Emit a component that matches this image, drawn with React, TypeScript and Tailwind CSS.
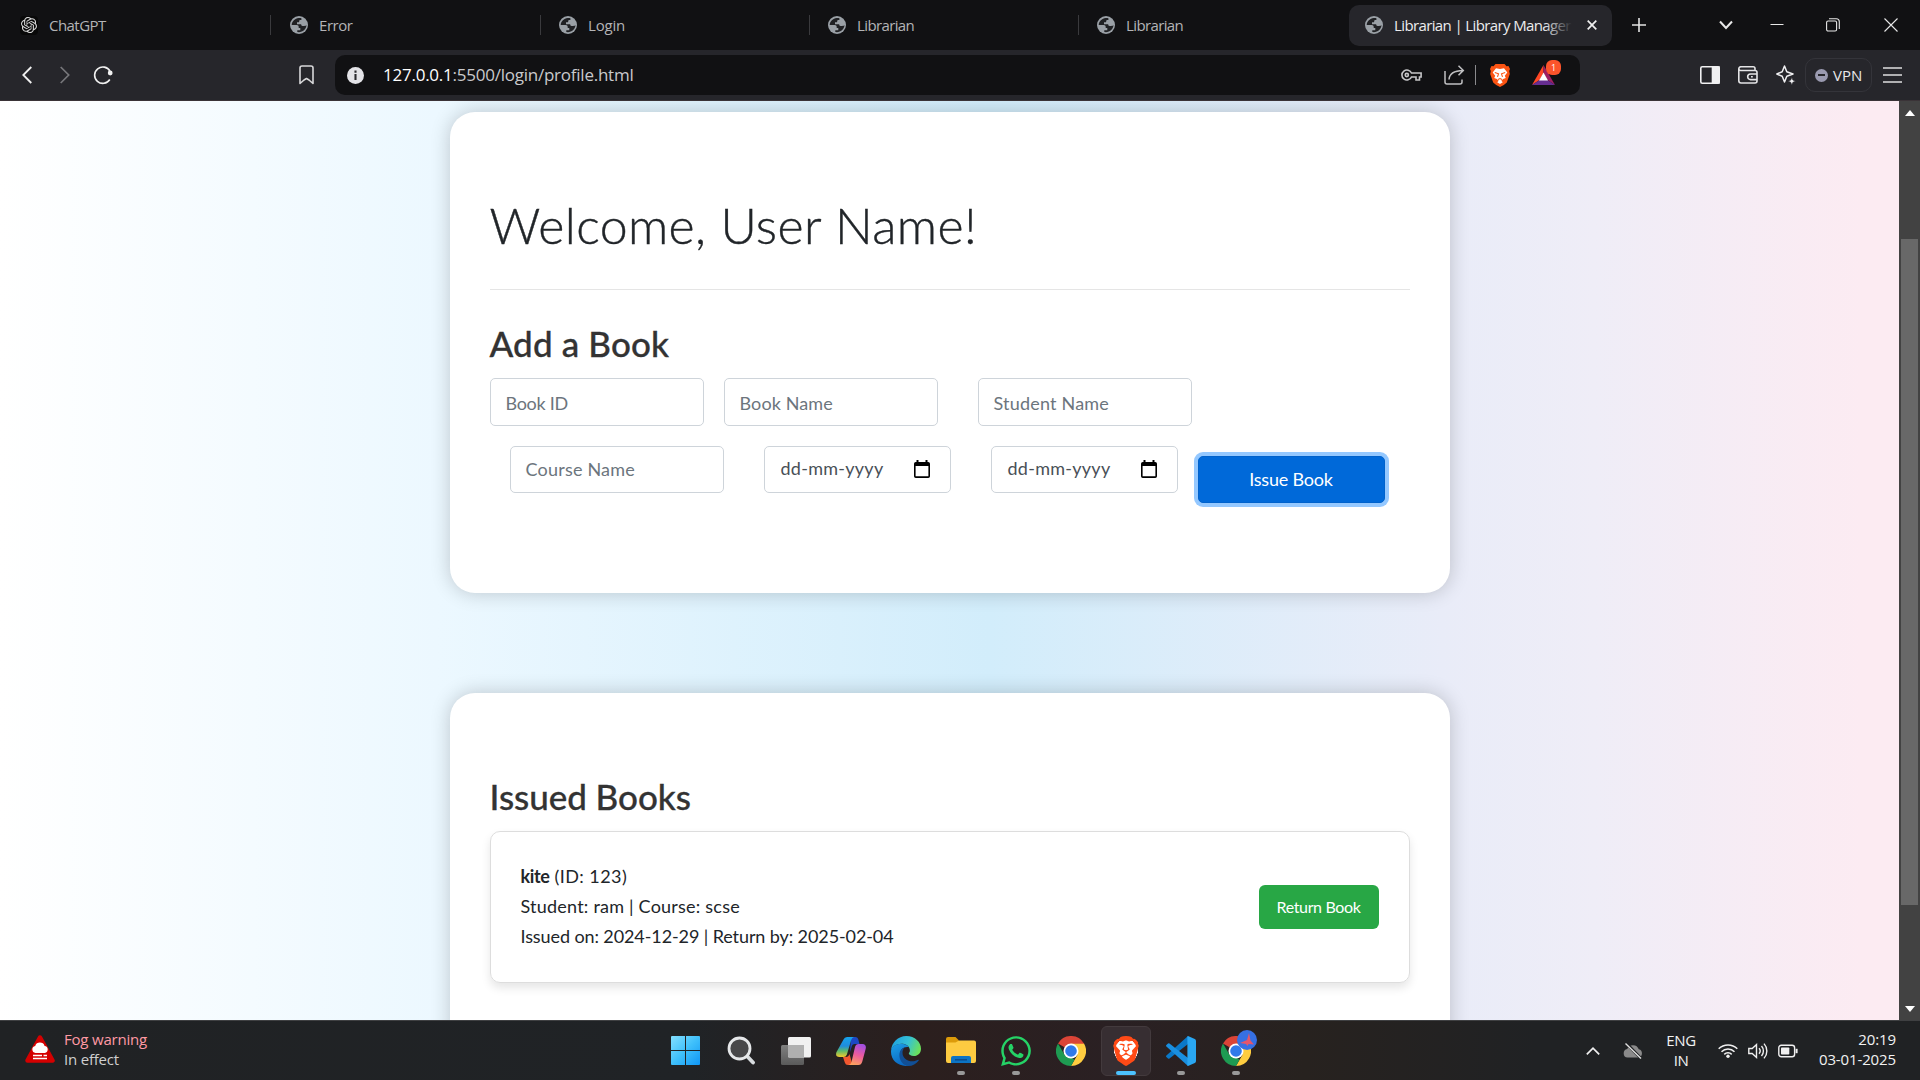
import type { ReactNode } from "react";
import { SiBrave, SiOpenai } from "react-icons/si";
import { FaWhatsapp } from "react-icons/fa";

function Globe() {
  return (
    <svg className="h-[18px] w-[18px] shrink-0" viewBox="0 0 18 18">
      <circle cx="9" cy="9" r="9" fill="#9aa0a6" />
      <path
        d="M8.6 2.1C5 2.5 2 5.300 1.700 8.900l5 .1c1.300 0 2 .9 2 2.100v.9h1.600v2.200H7.300v1.900c5 .8 9-2.600 9.200-7-.4.7-1.300.9-2.300.9h-1.600c-1 0-1.400-.8-1.400-1.700H7V6.300h1.300c.8 0 .9-.6.9-1.100 0-.8.500-1.200 1.300-1.200h.9V2.300c-.9-.3-1.900-.3-2.800-.2Z"
        fill="#202124"
      />
    </svg>
  );
}

function Tab({ label, icon, spacing = "tracking-[-0.62px]" }: { label: string; icon: ReactNode; spacing?: string }) {
  return (
    <div className="flex h-full w-[269px] shrink-0 items-center">
      <div className="flex flex-1 items-center gap-[11px]">
        {icon}
        <span className={"text-[15px] leading-5 text-[#b4b4b6] " + spacing}>{label}</span>
      </div>
      <div className="mr-[18px] h-5 w-px bg-[#3a3a3d]" />
    </div>
  );
}

function TabStrip() {
  return (
    <div className="flex h-[50px] shrink-0 items-center bg-[#111113] pl-[20px] pr-[22px]">
      <div className="mr-px flex h-full items-center">
        <Tab
          label="ChatGPT"
          spacing="tracking-[-0.55px]"
          icon={
            <span className="flex h-[19px] w-[18px] items-center justify-center rounded bg-[#080808]">
              <SiOpenai className="h-4 w-4 text-[#d8d8d8]" />
            </span>
          }
        />
      </div>
      <Tab label="Error" icon={<Globe />} spacing="tracking-[-0.45px]" />
      <Tab label="Login" icon={<Globe />} spacing="tracking-[-0.2px]" />
      <Tab label="Librarian" icon={<Globe />} />
      <div className="flex h-full w-[252px] shrink-0 items-center gap-[11px]">
        <Globe />
        <span className="text-[15px] leading-5 tracking-[-0.62px] text-[#b4b4b6]">Librarian</span>
      </div>
      <div className="flex h-[41px] w-[263px] shrink-0 items-center rounded-[10px] bg-[#26262b] pl-4">
        <Globe />
        <div className="relative ml-[11px] w-[178px] whitespace-nowrap text-[15px] leading-5 tracking-[-0.62px] text-[#ececee]">
          Librarian | Library Manager
          <div className="absolute inset-y-0 right-0 w-7 bg-gradient-to-r from-transparent to-[#26262b]" />
        </div>
        <svg className="ml-[15px] h-[10px] w-[10px]" viewBox="0 0 10 10" stroke="#f0f0f0" strokeWidth="1.7">
          <path d="M.7.7l8.600 8.600M9.300.7L.7 9.300" />
        </svg>
      </div>
      <svg className="ml-5 h-[14px] w-[14px]" viewBox="0 0 14 14" stroke="#e4e4e4" strokeWidth="1.6">
        <path d="M7 0v14M0 7h14" />
      </svg>
      <svg className="ml-[73px] h-3 w-[14px]" viewBox="0 0 14 12" fill="none" stroke="#e8e8e8" strokeWidth="2">
        <path d="M1 2.500l6 6.500 6-6.500" />
      </svg>
      <svg className="ml-[37px] h-[14px] w-[14px]" viewBox="0 0 14 14" stroke="#e8e8e8" strokeWidth="1">
        <path d="M.5 6.500h13" />
      </svg>
      <svg className="ml-[42px] h-[14px] w-[14px]" viewBox="0 0 14 14" fill="none" stroke="#e8e8e8" strokeWidth="1.1">
        <rect x=".6" y="3" width="10" height="10" rx="1.500" />
        <path d="M3 .7h7.300a3 3 0 0 1 3 3V11" />
      </svg>
      <svg className="ml-[44px] h-[14px] w-[14px]" viewBox="0 0 14 14" fill="none" stroke="#e8e8e8" strokeWidth="1.1">
        <path d="M.5.5l13 13M13.500.5l-13 13" />
      </svg>
    </div>
  );
}

function Toolbar() {
  return (
    <div className="flex h-[51px] shrink-0 items-center border-b border-[#3a3337] bg-[#26262b] pl-[22px]">
      <svg className="h-[18px] w-[10px]" viewBox="0 0 10 18" fill="none" stroke="#f0f0f0" strokeWidth="1.8">
        <path d="M9.300 1L1.300 9l8 8" />
      </svg>
      <svg className="ml-[28px] h-[18px] w-[10px]" viewBox="0 0 10 18" fill="none" stroke="#77777b" strokeWidth="1.700">
        <path d="M.7 1l8 8-8 8" />
      </svg>
      <svg className="ml-[23px] h-5 w-[21px]" viewBox="0 0 21 20" fill="none" stroke="#f0f0f0" strokeWidth="1.600">
        <path d="M16.800 14.500A8.200 8.200 0 1 1 17 6.200" />
        <circle cx="17.200" cy="8" r="2.400" fill="#f0f0f0" stroke="none" />
      </svg>
      <svg className="ml-[185px] h-5 w-[15px]" viewBox="0 0 15 20" fill="none" stroke="#d8d8da" strokeWidth="1.600" strokeLinejoin="round">
        <path d="M1 3a2 2 0 0 1 2-2h9a2 2 0 0 1 2 2v15.500l-4-3.500-2.500-1.500L5 15l-4 3.500Z" />
      </svg>
      <div className="ml-[21px] flex h-10 w-[1245px] shrink-0 items-center rounded-[10px] bg-[#111113] pl-3">
        <svg className="h-[17px] w-[17px]" viewBox="0 0 17 17">
          <circle cx="8.500" cy="8.500" r="8.500" fill="#e4e4e8" />
          <path d="M8.500 3.500v2.200M8.500 7v6" stroke="#2a2a2e" strokeWidth="2.100" />
        </svg>
        <span className="ml-[19px] w-[1018px] whitespace-nowrap text-[17px] leading-6 tracking-[-0.24px] text-[#c9c9cc]">
          <span className="text-white">127.0.0.1</span>:5500/login/profile.html
        </span>
        <svg className="h-3 w-[21px]" viewBox="0 0 21 12" fill="none" stroke="#c6c6c8" strokeWidth="1.600">
          <path d="M10.500 4h9.600v4h-1.600v3h-3.500V8h-4.500A5 5 0 1 1 10.500 4Z" />
          <circle cx="5.800" cy="6" r="1.600" />
        </svg>
        <svg className="ml-[22px] h-5 w-[21px]" viewBox="0 0 21 20" fill="none" stroke="#c0c0c2" strokeWidth="1.500">
          <path d="M1 6v11a2 2 0 0 0 2 2h13a2 2 0 0 0 2-2v-2.500" />
          <path d="M5 14.500C5.300 9 9.500 5.600 19 5.400M14.500.8L19.300 5.400l-4.800 4.800" />
        </svg>
        <div className="ml-[10px] h-5 w-px bg-[#8a8a8d]" />
        <svg className="ml-[14px] h-6 w-5" viewBox="0 0 20 24">
          <path d="M5.500 1h9L16.500 3.200l2-.2L20 6l-.8 2 .6 3-3 8.500-3 2.500L10 24l-3.800-2-3-2.500L.2 11l.6-3L0 6l1.500-3 2 .2Z" fill="#fb5413" />
          <path d="M6 5.300l4 .8 4-.8 3.300 4.200-2.500 3.300 1 2.200-2.700 1-1.800 1.800 1.500 1.500L10 21l-2.800-1.700 1.500-1.500L6.900 16l-2.700-1 1-2.200L2.700 9.500Z" fill="#fff" />
          <path d="M4.800 9.500l3.700 1.300-1 3M15.200 9.500l-3.700 1.300 1 3M8 16.500l2-1 2 1" stroke="#fb5413" fill="none" strokeWidth="1.100" />
        </svg>
        <div className="relative ml-[22px] h-5 w-[23px]">
          <svg className="h-5 w-[23px]" viewBox="0 0 23 20">
            <path d="M11.500 0L0 20l7.500-5 4-7Z" fill="#ff4724" />
            <path d="M11.500 0L23 20l-7.500-5-4-7Z" fill="#9e1f63" />
            <path d="M0 20h23l-7.500-5h-8Z" fill="#662d91" />
            <path d="M11.500 7.500L7 15.500h9Z" fill="#fff" />
          </svg>
          <div className="absolute -top-[5px] left-[14px] flex h-[15px] w-[15px] items-center justify-center rounded-[6px] bg-[#fb542b] text-[9px] leading-none text-white">
            1
          </div>
        </div>
      </div>
      <svg className="ml-[120px] h-[18px] w-5" viewBox="0 0 20 18" fill="none" stroke="#f0f0f2" strokeWidth="1.600">
        <rect x=".8" y=".8" width="18.400" height="16.400" rx="1.500" />
        <path d="M12.500 1h6.500v16h-6.500Z" fill="#f0f0f2" />
      </svg>
      <svg className="ml-[18px] h-[18px] w-5" viewBox="0 0 20 18" fill="none" stroke="#e4e4e6" strokeWidth="1.600">
        <path d="M17 4.500V2.600A1.800 1.800 0 0 0 15.200.8H3A2 2 0 0 0 .8 2.800v12a2.200 2.200 0 0 0 2.200 2.200h14a2 2 0 0 0 2-2v-8.500a2 2 0 0 0-2-2H3A2 2 0 0 1 .8 2.800" />
        <path d="M19 8h-6.500a2.800 2.800 0 0 0 0 5.600H19M13 10.800h1.800" />
      </svg>
      <svg className="ml-[18px] h-5 w-5" viewBox="0 0 20 20" fill="none" stroke="#f0f0f2" strokeWidth="1.500" strokeLinejoin="round">
        <path d="M8.500 1l2.300 5.700L17 9l-6.200 2.300L8.500 17l-2.300-5.700L.8 9l5.400-2.300Z" />
        <path d="M15.800 12.500l1.100 2.600 2.600 1.100-2.600 1.100-1.100 2.600-1.100-2.600-2.600-1.100 2.600-1.100Z" fill="#f0f0f2" stroke="#26262b" strokeWidth=".6" />
      </svg>
      <div className="ml-[9px] flex h-[34px] w-[67px] shrink-0 items-center rounded-[10px] border border-[#34343a] pl-[9px]">
        <div className="flex h-[13px] w-[13px] items-center justify-center rounded-full bg-[#9a9ab0]">
          <div className="h-[2px] w-[7px] bg-[#26262b]" />
        </div>
        <span className="ml-[5px] text-[15px] leading-5 text-[#e8e8ea]">VPN</span>
      </div>
      <svg className="ml-[11px] h-4 w-[19px]" viewBox="0 0 19 16" stroke="#dededf" strokeWidth="1.500">
        <path d="M0 1h19M0 8h19M0 15h19" />
      </svg>
    </div>
  );
}

function CalendarIcon() {
  return (
    <svg className="h-[18px] w-4" viewBox="0 0 16 18">
      <path d="M2.500 0h2v2h7V0h2v2h.7A1.800 1.800 0 0 1 16 3.800v12.400a1.800 1.800 0 0 1-1.800 1.800H1.800A1.800 1.800 0 0 1 0 16.200V3.800A1.800 1.800 0 0 1 1.800 2h.7ZM1.600 6v10.300h12.800V6Z" fill="#000" />
    </svg>
  );
}

function Field({ label, size = "h-12 pt-[2px]", spacing }: { label: string; size?: string; spacing: string }) {
  return (
    <div className={"flex w-[214px] items-center rounded-[5px] border border-[#ced4da] pl-[15px] text-[18px] text-[#6c757d] " + size + " " + spacing}>
      {label}
    </div>
  );
}

function DateField() {
  return (
    <div className="flex h-[47px] w-[187px] items-center justify-between rounded-[5px] border border-[#ced4da] pl-4 pr-5 text-[18px] tracking-[0.27px] text-[#495057]">
      <span className="-mt-[2px]">dd-mm-yyyy</span>
      <div className="-mt-[1px]">
        <CalendarIcon />
      </div>
    </div>
  );
}

function Page() {
  return (
    <div className="flex h-[919px] shrink-0 overflow-hidden">
      <main className="w-[1899px] bg-[linear-gradient(90deg,#ffffff_0%,#ecf8ff_23%,#d2edfb_52%,#e9ecf8_76%,#efedf7_84%,#fcebf2_98%)] font-['Lato',sans-serif]">
        <section className="mx-auto mt-[11px] h-[481px] w-[1000px] rounded-[25px] bg-white px-10 pt-[83px] shadow-[0_0_20px_rgba(0,0,0,0.2)]">
          <h1 className="text-[50px] font-light leading-[60px] tracking-[0.4px] text-[#212529] [-webkit-text-stroke:0.4px_#212529]">
            Welcome, User Name!
          </h1>
          <div className="mt-[34px] h-px bg-[#e5e5e5]" />
          <h2 className="mt-8 text-[35px] font-medium leading-[42px] tracking-[0.15px] text-[#333333] [-webkit-text-stroke:0.3px_#333333]">
            Add a Book
          </h2>
          <div className="mt-[14px] flex">
            <Field label="Book ID" spacing="tracking-[-0.3px]" />
            <div className="ml-5">
              <Field label="Book Name" spacing="tracking-[0.1px]" />
            </div>
            <div className="ml-10">
              <Field label="Student Name" spacing="tracking-[0.2px]" />
            </div>
          </div>
          <div className="mt-5 flex items-start pl-5">
            <Field label="Course Name" size="h-[47px]" spacing="tracking-[0.2px]" />
            <div className="ml-10">
              <DateField />
            </div>
            <div className="ml-10">
              <DateField />
            </div>
            <button className="ml-5 mt-[10px] h-[47px] w-[187px] rounded-[5px] border border-[#0062cc] bg-[#0069d9] pb-px text-[18px] tracking-[-0.2px] text-white shadow-[0_0_0_4px_#94c8ff]">
              Issue Book
            </button>
          </div>
        </section>
        <section className="mx-auto mt-[100px] h-[400px] w-[1000px] rounded-[25px] bg-white px-10 pt-[82px] shadow-[0_0_20px_rgba(0,0,0,0.2)]">
          <h2 className="text-[35px] font-medium leading-[42px] tracking-[-0.05px] text-[#333333] [-webkit-text-stroke:0.3px_#333333]">
            Issued Books
          </h2>
          <div className="mt-[14px] flex h-[152px] items-center justify-between rounded-[10px] border border-[#dddddd] px-[30px] shadow-[0_5px_10px_rgba(0,0,0,0.1)]">
            <div className="-mt-[2px] whitespace-nowrap text-[18px] leading-[30px] text-[#212529]">
              <p className="tracking-[0.42px]">
                <span className="font-bold tracking-[-0.35px]">kite</span> (ID: 123)
              </p>
              <p className="tracking-[0.22px]">Student: ram | Course: scse</p>
              <p className="tracking-[-0.1px]">Issued on: 2024-12-29 | Return by: 2025-02-04</p>
            </div>
            <button className="h-11 w-[120px] rounded-[6px] bg-[#28a745] text-[16px] tracking-[-0.36px] text-white">Return Book</button>
          </div>
        </section>
      </main>
      <div className="flex w-[21px] flex-col items-center bg-[#424242]">
        <svg className="mt-[9px] h-[6px] w-[10px]" viewBox="0 0 10 6">
          <path d="M0 6l5-6 5 6Z" fill="#fff" />
        </svg>
        <div className="mt-[123px] h-[666px] w-[17px] bg-[#686868]" />
        <svg className="mt-[101px] h-[6px] w-[10px]" viewBox="0 0 10 6">
          <path d="M0 0l5 6 5-6Z" fill="#fff" />
        </svg>
      </div>
    </div>
  );
}

function ChromeLogo() {
  return (
    <svg className="h-[30px] w-[30px]" viewBox="0 0 48 48">
      <path d="M24 24L3.200 12A24 24 0 0 1 44.800 12Z" fill="#db4437" />
      <path d="M24 12h20.800A24 24 0 0 1 24 48l10.400-18Z" fill="#ffcd40" />
      <path d="M3.200 12l10.400 18L24 34l5.600 4L24 48A24 24 0 0 1 3.200 12Z" fill="#1e9b52" />
      <path d="M24 12h20.800l-.6-1H22Z" fill="#db4437" />
      <circle cx="24" cy="24" r="12" fill="#fff" />
      <circle cx="24" cy="24" r="9.300" fill="#3079ea" />
    </svg>
  );
}

function TaskItem({ children, state = "idle" }: { children: ReactNode; state?: "idle" | "open" | "active" }) {
  return (
    <div className="flex w-[55px] justify-center">
      <div
        className={
          state === "active"
            ? "flex h-[50px] w-[50px] flex-col items-center rounded-[6px] border border-[#433a3d] bg-[#372e32] pt-[9px]"
            : "flex h-[50px] w-[50px] flex-col items-center pt-[10px]"
        }
      >
        <div className="flex h-[30px] items-center">{children}</div>
        {state === "open" && <div className="mt-[5px] h-1 w-2 shrink-0 rounded-full bg-[#999999]" />}
        {state === "active" && <div className="mt-[5px] h-1 w-5 shrink-0 rounded-full bg-[#4cc2ff]" />}
      </div>
    </div>
  );
}

function Taskbar() {
  return (
    <div className="flex h-[60px] shrink-0 items-center border-t border-[#3f4042] bg-[linear-gradient(90deg,#202224_0%,#202326_36%,#2b1f1e_48%,#2a2023_58%,#27221f_68%,#202224_80%)]">
      <div className="flex w-[658px] items-center pl-[25px]">
        <svg className="-mt-[3px] h-7 w-[30px]" viewBox="0 0 30 28">
          <path d="M15 2.500L27.500 25.500h-25Z" fill="#d40000" stroke="#d40000" strokeWidth="4.500" strokeLinejoin="round" />
          <path d="M10.500 18a3.600 3.600 0 0 1-.3-7.100 5 5 0 0 1 9.400 0 3.600 3.600 0 0 1 .2 7.100Z" fill="#fff" />
          <path d="M8 20.500h9M18.500 20.500H22M8 23.500h14" stroke="#fff" strokeWidth="1.500" />
        </svg>
        <div className="-mt-[3px] ml-[9px] text-[15px] leading-5">
          <div className="tracking-[-0.2px] text-[#ff99a4]">Fog warning</div>
          <div className="tracking-[-0.2px] text-[#cfcfcf]">In effect</div>
        </div>
      </div>
      <TaskItem>
        <svg className="h-[29px] w-[29px]" viewBox="0 0 29 29">
          <defs>
            <linearGradient id="win" x1="0" y1="0" x2="1" y2="1">
              <stop offset="0" stopColor="#84e0ff" />
              <stop offset=".5" stopColor="#3fc0fb" />
              <stop offset="1" stopColor="#0f96f5" />
            </linearGradient>
          </defs>
          <path d="M1 0h13v14H0V1Q0 0 1 0ZM15 0h13q1 0 1 1v13H15ZM0 15h14v14H1q-1 0-1-1ZM15 15h14v13q0 1-1 1H15Z" fill="url(#win)" />
        </svg>
      </TaskItem>
      <TaskItem>
        <svg className="h-[29px] w-[28px]" viewBox="0 0 28 29">
          <path d="M19 19l7 7.500" stroke="#d8dcdf" strokeWidth="3.800" strokeLinecap="round" />
          <circle cx="12.500" cy="12.500" r="10.500" fill="#48484a" stroke="#e6e8ea" strokeWidth="2.800" />
        </svg>
      </TaskItem>
      <TaskItem>
        <svg className="h-7 w-[30px]" viewBox="0 0 30 28">
          <defs>
            <linearGradient id="tv" x1="0" y1="0" x2="0" y2="1">
              <stop offset="0" stopColor="#808080" />
              <stop offset="1" stopColor="#5a5a5a" />
            </linearGradient>
          </defs>
          <rect x="0" y="8" width="23" height="20" rx="1.500" fill="url(#tv)" />
          <rect x="7" y="0" width="23" height="20.500" rx="1.500" fill="#f1f1f1" />
          <path d="M7 8h16v12.500H8.500A1.500 1.500 0 0 1 7 19Z" fill="#b0b0b0" />
        </svg>
      </TaskItem>
      <TaskItem>
        <svg className="h-7 w-[30px]" viewBox="0 0 30 28">
          <defs>
            <linearGradient id="cpa" x1="0" y1="0" x2="0" y2="1">
              <stop offset="0" stopColor="#16a3ec" />
              <stop offset=".45" stopColor="#1f8cdc" />
              <stop offset=".7" stopColor="#5dbb6a" />
              <stop offset="1" stopColor="#f4c92b" />
            </linearGradient>
            <linearGradient id="cpb" x1=".6" y1="0" x2=".3" y2="1">
              <stop offset="0" stopColor="#a44fe0" />
              <stop offset=".5" stopColor="#ee5b9c" />
              <stop offset="1" stopColor="#fba35c" />
            </linearGradient>
          </defs>
          <path d="M15 0h4.500q2 0 2.700 2L23.500 7h-5q-2 0-2.600 2L14 15Z" fill="#1d48c4" />
          <path d="M7.500 2.500Q8.500 0 11 0h7q-2 .3-2.800 3l-4.300 14.500Q10 20 7.500 20H3.500Q-1 20 .4 15.200Z" fill="url(#cpa)" />
          <path d="M7 20h3q2.500 0 3.500-3l2.500 9q.6 2 2 2h-6q-2.500 0-3.200-2.500Z" fill="#f2572f" />
          <path d="M19 10q.8-3 3.500-3H26.500Q31 7.500 29.500 12.500L26.300 24.500Q25.300 28 22.500 28H12.500q2.200-.3 3-3Z" fill="url(#cpb)" />
        </svg>
      </TaskItem>
      <TaskItem>
        <svg className="h-[30px] w-[30px]" viewBox="0 0 30 30">
          <defs>
            <linearGradient id="ea" x1="0" y1=".2" x2="1" y2=".5">
              <stop offset="0" stopColor="#1d9fe0" />
              <stop offset=".55" stopColor="#35c1d5" />
              <stop offset="1" stopColor="#6be05b" />
            </linearGradient>
            <linearGradient id="eb" x1="0" y1="0" x2=".4" y2="1">
              <stop offset="0" stopColor="#1da1e6" />
              <stop offset="1" stopColor="#0b6ac4" />
            </linearGradient>
          </defs>
          <path d="M.1 14.500C.6 6.500 7 0 15.300 0 24 0 30 6.300 30 12.700c0 4.300-3 7.300-7.200 7.300-3.300 0-5-1.300-5-2.400 0-.9 1.100-1.200 1.100-3.200C18.900 10.500 15 7.800 10.500 7.800 5 7.800 1.200 11 .1 14.500Z" fill="url(#ea)" />
          <path d="M0 15.800C0 10.700 5 7.700 10 7.700c3 0 6 1 7.700 3.400-5.500-.8-8.500 2.400-8.500 7.100 0 5.800 4.300 10 9.300 11.300C9 31.600 0 25.500 0 15.800Z" fill="url(#eb)" />
          <path d="M13.500 11.700c-1.300 1.300-2 2.900-2 5 0 5.300 4.700 8.600 9.800 8.600 2.400 0 4.300-.8 5.800-1.600.5-.2.900.2.600.7-2.300 3.500-6.300 5.600-10.300 5.600-5 0-9-5.600-9-10.800 0-4 2-6.700 5.100-7.500Z" fill="#114f96" />
        </svg>
      </TaskItem>
      <TaskItem state="open">
        <svg className="h-[27px] w-[30px]" viewBox="0 0 30 27">
          <path d="M0 2q0-2 2-2h7.500l3.500 3.500V9H0Z" fill="#dc9b0a" />
          <path d="M0 5.500h9.500L13 3.500h15q2 0 2 2V24q0 2-2 2H2q-2 0-2-2Z" fill="#fdcb41" />
          <path d="M5 26v-5q0-2 2-2h16q2 0 2 2v5Z" fill="#0c74c4" />
          <path d="M9 22.800h12" stroke="#0b4c8c" strokeWidth="1.500" />
        </svg>
      </TaskItem>
      <TaskItem state="open">
        <FaWhatsapp className="h-[34px] w-[34px] text-[#25d366]" />
      </TaskItem>
      <TaskItem>
        <ChromeLogo />
      </TaskItem>
      <TaskItem state="active">
        <SiBrave className="h-[30px] w-[30px] rounded-full bg-[radial-gradient(circle,#fff_0_55%,transparent_56%)] text-[#ff4a16]" />
      </TaskItem>
      <TaskItem state="open">
        <svg className="h-[30px] w-[30px]" viewBox="0 0 30 30">
          <path d="M22 0v8L3.500 22.500q-.8.600-1.500 0L.4 21q-.8-.8 0-1.600Z" fill="#0a78c8" />
          <path d="M22 30v-8L3.500 7.500q-.8-.6-1.500 0L.4 9q-.8.8 0 1.600Z" fill="#1a8fe0" />
          <path d="M22 0l6.800 3q1.200.6 1.200 2v20q0 1.400-1.200 2L22 30q-.6 0-.6-1V1q0-1 .6-1Z" fill="#2aa7f2" />
        </svg>
      </TaskItem>
      <TaskItem state="open">
        <div className="relative">
          <ChromeLogo />
          <div className="absolute -top-[6px] left-4 flex h-5 w-5 items-center justify-center rounded-full bg-[#3670e4]">
            <svg className="h-[14px] w-[14px]" viewBox="0 0 14 14">
              <path d="M9 0l1.500 7.500 3.500 4-5.500-.6L7.500 13 6 11 0 10l7-3Z" fill="#e4566c" />
            </svg>
          </div>
        </div>
      </TaskItem>
      <div className="flex flex-1 items-center justify-end pr-6 text-[15px] leading-5 text-[#f2f2f2]">
        <svg className="h-2 w-[14px]" viewBox="0 0 14 8" fill="none" stroke="#f0f0f0" strokeWidth="1.700">
          <path d="M.8 7.300L7 1.200l6.200 6.100" />
        </svg>
        <svg className="ml-[23px] h-4 w-5" viewBox="0 0 20 16">
          <path d="M4.500 14.500a4.300 4.300 0 0 1-.3-8.500 6.200 6.200 0 0 1 11.600.3 4.200 4.200 0 0 1-.3 8.200Z" fill="#8a8a8a" />
          <path d="M3 0l15 15.500" stroke="#202224" strokeWidth="3" />
          <path d="M2.500.5l15.500 15" stroke="#e0e0e0" strokeWidth="1.400" />
        </svg>
        <div className="-mt-px ml-[23px] w-[30px] text-center tracking-[-0.4px]">
          <div>ENG</div>
          <div>IN</div>
        </div>
        <svg className="ml-[22px] h-[15px] w-5" viewBox="0 0 20 15" fill="none" stroke="#f0f0f0" strokeWidth="1.500">
          <path d="M.7 5.800a13 13 0 0 1 18.600 0M3.500 8.700a9 9 0 0 1 13 0M6.300 11.400a5.200 5.200 0 0 1 7.400 0" />
          <circle cx="10" cy="13.200" r="1.700" fill="#f0f0f0" stroke="none" />
        </svg>
        <svg className="ml-[10px] h-[18px] w-5" viewBox="0 0 20 18" fill="none" stroke="#f0f0f0" strokeWidth="1.400">
          <path d="M.8 6.500h3.400L8.500 2.500v13L4.200 11.500H.8ZM11 6.300a4 4 0 0 1 0 5.400M13.500 4a7.500 7.500 0 0 1 0 10M16 1.600a11 11 0 0 1 0 14.800" />
        </svg>
        <svg className="ml-[10px] h-[14px] w-5" viewBox="0 0 20 14" fill="none" stroke="#f0f0f0" strokeWidth="1.400">
          <rect x=".8" y="1.200" width="15.800" height="11.600" rx="2.500" />
          <rect x="3" y="3.400" width="8.300" height="7.200" rx=".8" fill="#f0f0f0" stroke="none" />
          <path d="M18.600 4.800v4.400" strokeWidth="2" />
        </svg>
        <div className="-mt-[3px] ml-[19px] w-[79px] text-right tracking-[-0.12px]">
          <div>20:19</div>
          <div className="whitespace-nowrap">03-01-2025</div>
        </div>
      </div>
    </div>
  );
}

export default function App() {
  return (
    <div className="flex h-[1080px] w-[1920px] flex-col overflow-hidden bg-[#111113] font-['Open_Sans',sans-serif]">
      <TabStrip />
      <Toolbar />
      <Page />
      <Taskbar />
    </div>
  );
}
